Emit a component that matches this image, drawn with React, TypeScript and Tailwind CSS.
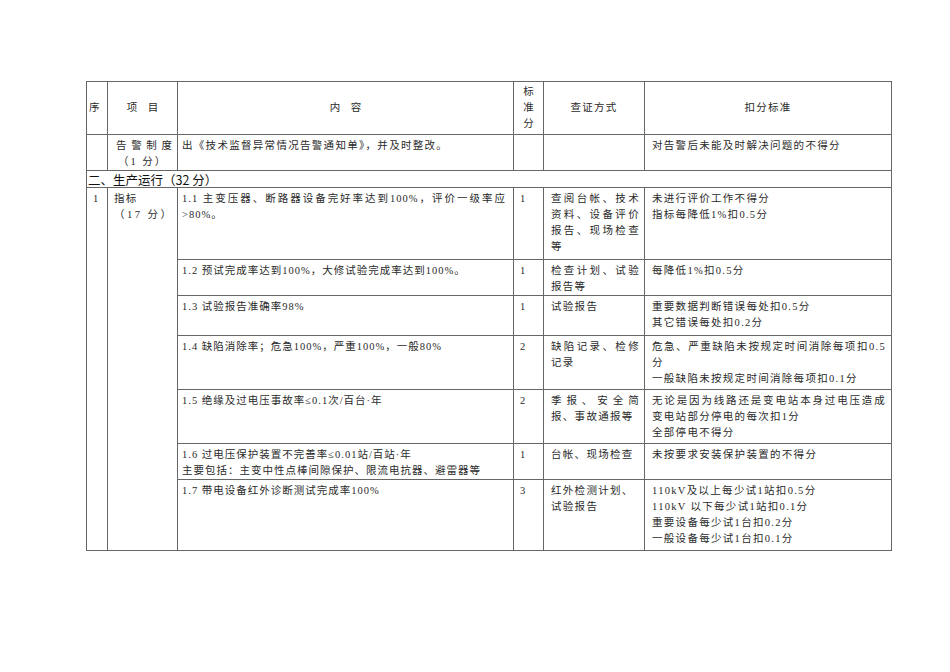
import React from "react";

type Ln = string | { t: string; j: boolean };
const J = (t: string): Ln => ({ t, j: true });

const Lines = ({ lines }: { lines: Ln[] }) => (
  <>
    {lines.map((l, i) =>
      typeof l === "string" ? (
        <div key={i} className="whitespace-nowrap">{l}</div>
      ) : (
        <div key={i} className="whitespace-nowrap text-justify [text-align-last:justify]">{l.t}</div>
      )
    )}
  </>
);

const td = "border border-[#666] align-top pt-[3px]";

interface RowData {
  h: string;
  content: Ln[];
  score: string;
  check: Ln[];
  deduct: Ln[];
}

const rows: RowData[] = [
  {
    h: "h-[72px]",
    content: [J("1.1 主变压器、断路器设备完好率达到100%，评价一级率应"), ">80%。"],
    score: "1",
    check: [J("查阅台帐、技术"), J("资料、设备评价"), J("报告、现场检查"), "等"],
    deduct: ["未进行评价工作不得分", "指标每降低1%扣0.5分"],
  },
  {
    h: "h-[36px]",
    content: ["1.2 预试完成率达到100%，大修试验完成率达到100%。"],
    score: "1",
    check: [J("检查计划、试验"), "报告等"],
    deduct: ["每降低1%扣0.5分"],
  },
  {
    h: "h-[40px]",
    content: ["1.3 试验报告准确率98%"],
    score: "1",
    check: ["试验报告"],
    deduct: ["重要数据判断错误每处扣0.5分", "其它错误每处扣0.2分"],
  },
  {
    h: "h-[54px]",
    content: ["1.4 缺陷消除率；危急100%，严重100%，一般80%"],
    score: "2",
    check: [J("缺陷记录、检修"), "记录"],
    deduct: [J("危急、严重缺陷未按规定时间消除每项扣0.5"), "分", "一般缺陷未按规定时间消除每项扣0.1分"],
  },
  {
    h: "h-[54px]",
    content: ["1.5 绝缘及过电压事故率≤0.1次/百台·年"],
    score: "2",
    check: [J("季报、安全简"), "报、事故通报等"],
    deduct: [J("无论是因为线路还是变电站本身过电压造成"), "变电站部分停电的每次扣1分", "全部停电不得分"],
  },
  {
    h: "h-[35px]",
    content: ["1.6 过电压保护装置不完善率≤0.01站/百站·年", "主要包括：主变中性点棒间隙保护、限流电抗器、避雷器等"],
    score: "1",
    check: ["台帐、现场检查"],
    deduct: ["未按要求安装保护装置的不得分"],
  },
  {
    h: "h-[71px]",
    content: ["1.7 带电设备红外诊断测试完成率100%"],
    score: "3",
    check: ["红外检测计划、", "试验报告"],
    deduct: ["110kV及以上每少试1站扣0.5分", "110kV 以下每少试1站扣0.1分", "重要设备每少试1台扣0.2分", "一般设备每少试1台扣0.1分"],
  },
];

export default function App() {
  return (
    <div className="w-[950px] h-[672px] bg-white pl-[86px] pt-[81px] text-[#2a2a2a] font-['Liberation_Serif','Noto_Sans_CJK_SC',serif] text-[10.5px] leading-[16px]">
      <table className="table-fixed border-collapse w-[805px]">
        <colgroup>
          <col className="w-[21px]" />
          <col className="w-[70px]" />
          <col className="w-[336px]" />
          <col className="w-[30px]" />
          <col className="w-[101px]" />
          <col className="w-[247px]" />
        </colgroup>
        <tbody>
          {/* header */}
          <tr className="h-[53px]">
            <td className="border border-[#666] align-middle pl-[2px]">序</td>
            <td className="border border-[#666] align-middle text-center whitespace-pre">项    目</td>
            <td className="border border-[#666] align-middle text-center whitespace-pre">内    容</td>
            <td className="border border-[#666] align-middle text-center">
              <div>标</div>
              <div>准</div>
              <div>分</div>
            </td>
            <td className="border border-[#666] align-middle text-center tracking-[1.3px]">查证方式</td>
            <td className="border border-[#666] align-middle text-center tracking-[1.3px]">扣分标准</td>
          </tr>

          <tr className="h-[36px]">
            <td className={td}></td>
            <td className={`${td} pl-[8px] pr-[5px]`}>
              <Lines lines={[J("告警制度")]} />
              <div className="pl-[2px] tracking-[2px] whitespace-pre">（1 分）</div>
            </td>
            <td className={`${td} pl-[4px] tracking-[1.3px]`}>出《技术监督异常情况告警通知单》，并及时整改。</td>
            <td className={td}></td>
            <td className={td}></td>
            <td className={`${td} pl-[7px] tracking-[1.3px]`}>对告警后未能及时解决问题的不得分</td>
          </tr>

          <tr className="h-[17px]">
            <td colSpan={6} className="border border-[#666] align-middle pl-[1px] font-['Noto_Sans_CJK_SC',sans-serif] text-[12.5px] leading-[15px] text-[#111]">
              二、生产运行（32 分）
            </td>
          </tr>

          {rows.map((r, i) => (
            <tr key={i} className={r.h}>
              {i === 0 && (
                <>
                  <td rowSpan={rows.length} className={`${td} pl-[6px]`}>1</td>
                  <td rowSpan={rows.length} className={`${td} pl-[6px] tracking-[1.3px]`}>
                    <div>指标</div>
                    <div className="tracking-[2.5px] whitespace-pre">（17 分）</div>
                  </td>
                </>
              )}
              <td className={`${td} pl-[4px] pr-[7px] tracking-[1px]`}>
                <Lines lines={r.content} />
              </td>
              <td className={`${td} pl-[6px]`}>{r.score}</td>
              <td className={`${td} pl-[7px] pr-[4px] tracking-[1.3px]`}>
                <Lines lines={r.check} />
              </td>
              <td className={`${td} pl-[7px] pr-[5px] tracking-[1.3px]`}>
                <Lines lines={r.deduct} />
              </td>
            </tr>
          ))}
        </tbody>
      </table>
    </div>
  );
}
